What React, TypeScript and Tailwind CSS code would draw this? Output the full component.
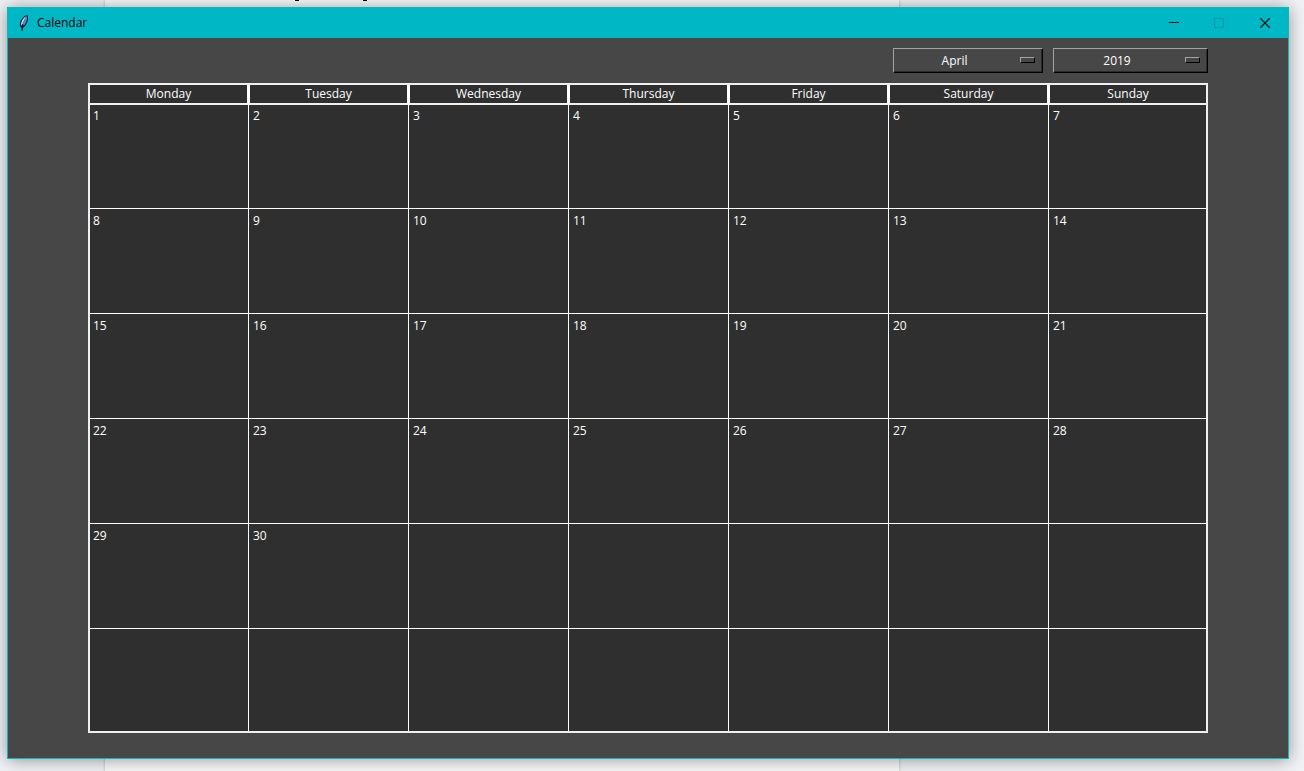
import { useState } from "react";

const DAYS = ["Monday", "Tuesday", "Wednesday", "Thursday", "Friday", "Saturday", "Sunday"];
const MONTHS = [
  "January", "February", "March", "April", "May", "June",
  "July", "August", "September", "October", "November", "December",
];
const YEARS = ["2017", "2018", "2019", "2020", "2021"];

function buildWeeks(month: number, year: number): (number | null)[][] {
  const offset = (new Date(year, month, 1).getDay() + 6) % 7;
  const count = new Date(year, month + 1, 0).getDate();
  return Array.from({ length: 6 }, (_, week) =>
    Array.from({ length: 7 }, (_, day) => {
      const n = week * 7 + day - offset + 1;
      return n >= 1 && n <= count ? n : null;
    }),
  );
}

function FeatherIcon() {
  return (
    <svg width="10" height="16" viewBox="0 0 10 16" aria-hidden="true">
      <path d="M9 0 6 .8 3.5 3 1.5 6 .9 9.5 1.5 12 3.2 13 5.8 11.2 7.8 8.5 9 4.5Z" fill="#101a24" />
      <path d="M7.6 1 5 2.8 3 5.5 2 8.5 2.3 11 3.4 9.5 5 6Z" fill="#b9d4ec" />
      <path d="M8.2 1 6 3.5 4.2 7.5 3.4 11.2 5 10.4 6.9 8 8 4.5Z" fill="#4286cc" />
      <path d="M3.9 9.5 2.9 15.8" fill="none" stroke="#05090c" strokeWidth="1.2" />
    </svg>
  );
}

type MenuProps = {
  label: string;
  value: string;
  options: string[];
  width: string;
  onChange: (value: string) => void;
};

function OptionMenu({ label, value, options, width, onChange }: MenuProps) {
  return (
    <div className={`relative ${width}`}>
      <select
        aria-label={label}
        value={value}
        onChange={(e) => onChange(e.target.value)}
        className="block h-[25px] w-full appearance-none rounded-none border border-t-[#a3a3a3] border-r-black border-b-black border-l-[#a3a3a3] bg-[#474747] pr-[27px] text-center text-xs text-white shadow-[inset_-1px_-1px_0_#2c2c2c] outline-none"
      >
        {options.map((o) => (
          <option key={o}>{o}</option>
        ))}
      </select>
      <span className="pointer-events-none absolute top-[9px] right-2 h-[6px] w-[15px] border border-t-[#a3a3a3] border-r-black border-b-black border-l-[#a3a3a3] bg-[#474747]" />
    </div>
  );
}

export default function App() {
  const [month, setMonth] = useState("April");
  const [year, setYear] = useState("2019");
  const weeks = buildWeeks(MONTHS.indexOf(month), Number(year));

  return (
    <div className="relative flex min-h-screen flex-col overflow-hidden bg-[#f1f2f5] pt-[7px] pr-[15px] pb-3 pl-[7px] font-['Open_Sans','Noto_Sans',sans-serif] text-xs text-white">
      <div className="absolute inset-y-0 right-[405px] left-[105px] bg-[#fafafa] shadow-[0_0_3px_#b5b5b5]">
        <span className="absolute top-0 left-[190px] h-px w-1 bg-black" />
        <span className="absolute top-0 left-[258px] h-px w-1 bg-black" />
      </div>
      <main className="relative flex flex-1 flex-col border border-[#08b6c4] bg-[#474747] shadow-[0_1px_16px_rgba(0,0,0,0.4)]">
        <header className="flex h-[30px] items-center bg-[#00b7c6] pl-[11px] text-black">
          <FeatherIcon />
          <h1 className="flex-1 pl-2">Calendar</h1>
          <button type="button" aria-label="Minimize" className="flex h-full w-[44px] items-center justify-center pb-px">
            <svg width="10" height="10" viewBox="0 0 10 10" shapeRendering="crispEdges">
              <path d="M0 4.5H10" stroke="#000" />
            </svg>
          </button>
          <button type="button" aria-label="Maximize" disabled className="flex h-full w-[46px] items-center justify-center pb-px">
            <svg width="10" height="10" viewBox="0 0 10 10" shapeRendering="crispEdges">
              <path d="M.5 .5H9.5V9.5H.5Z" fill="none" stroke="#00929e" />
            </svg>
          </button>
          <button type="button" aria-label="Close" className="flex h-full w-[46px] items-center justify-center pb-px">
            <svg width="10" height="10" viewBox="0 0 10 10">
              <path d="M0 0 10 10M10 0 0 10" stroke="#000" strokeWidth="1.2" />
            </svg>
          </button>
        </header>
        <div className="px-20 pt-[10px] pb-[25px]">
          <div className="mb-[10px] flex justify-end gap-[10px]">
            <OptionMenu label="Month" value={month} options={MONTHS} width="w-[150px]" onChange={setMonth} />
            <OptionMenu label="Year" value={year} options={YEARS} width="w-[155px]" onChange={setYear} />
          </div>
          <table className="w-full table-fixed border-separate border-spacing-0 border-2 border-[#f0f0f0] bg-[#2f2f2f]">
            <colgroup>
              <col className="w-[159px]" />
              <col span={5} />
              <col className="w-[157px]" />
            </colgroup>
            <thead>
              <tr>
                {DAYS.map((d) => (
                  <th
                    key={d}
                    scope="col"
                    className="h-5 border-r-2 border-b-2 border-l border-r-white border-b-[#f0f0f0] border-l-white p-0 leading-[18px] font-normal first:border-l-0 last:border-r-0"
                  >
                    {d}
                  </th>
                ))}
              </tr>
            </thead>
            <tbody>
              {weeks.map((week, i) => (
                <tr key={i} className="group">
                  {week.map((n, j) => (
                    <td
                      key={j}
                      className="h-[105px] border-r border-b border-white px-1 pt-1 align-top leading-4 group-first:h-[104px] group-first:pt-[3px] group-last:h-[102px] group-last:border-b-0 first:pl-[3px] last:border-r-0"
                    >
                      {n}
                    </td>
                  ))}
                </tr>
              ))}
            </tbody>
          </table>
        </div>
      </main>
    </div>
  );
}
